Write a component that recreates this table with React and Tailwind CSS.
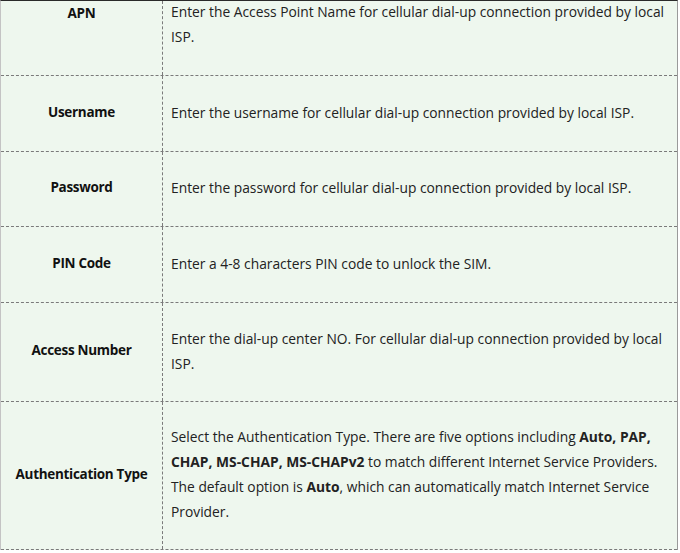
const rows = [
  {
    label: 'APN',
    h: 'h-[75px]',
    top: true,
    desc: 'Enter the Access Point Name for cellular dial-up connection provided by local ISP.',
  },
  {
    label: 'Username',
    h: 'h-[76px]',
    desc: 'Enter the username for cellular dial-up connection provided by local ISP.',
  },
  {
    label: 'Password',
    h: 'h-[75px]',
    desc: 'Enter the password for cellular dial-up connection provided by local ISP.',
  },
  {
    label: 'PIN Code',
    h: 'h-[76px]',
    desc: 'Enter a 4-8 characters PIN code to unlock the SIM.',
  },
  {
    label: 'Access Number',
    h: 'h-[99px]',
    desc: 'Enter the dial-up center NO. For cellular dial-up connection provided by local ISP.',
  },
  {
    label: 'Authentication Type',
    h: 'h-[148px]',
    desc: (
      <>
        Select the Authentication Type. There are five options including <b>Auto, PAP, CHAP, MS-CHAP, MS-CHAPv2</b> to
        match different Internet Service Providers. The default option is <b>Auto</b>, which can automatically match
        Internet Service Provider.
      </>
    ),
  },
];

export default function App() {
  return (
    <div className="h-[553px] w-[680px] overflow-hidden bg-white font-['Open_Sans',sans-serif] text-[13.8px] text-[#222]">
      <div className="w-[678px] border-t border-l border-r border-t-[#2a2a2a] border-l-[#c4c4c4] border-r-[#9a9a9a] border-l-dotted border-r-dashed bg-[#eef7ee]">
        {rows.map((r) => (
          <div
            key={r.label}
            className={`grid grid-cols-[162px_1fr] border-b border-dashed border-b-[#7a7a7a] ${r.h}`}
          >
            <div
              className={`flex justify-center border-r border-dashed border-r-[#7a7a7a] text-[13.5px] font-bold tracking-[-0.3px] text-[#111] ${
                r.top ? 'items-start pt-[2px]' : 'items-center pb-[3px]'
              }`}
            >
              {r.label}
            </div>
            <div className={`flex pl-[8px] pr-[4px] leading-[25px] ${r.top ? 'items-start' : 'items-center pb-[3px]'}`}>
              <p className={r.top ? '-mt-[2px]' : ''}>{r.desc}</p>
            </div>
          </div>
        ))}
      </div>
    </div>
  );
}
